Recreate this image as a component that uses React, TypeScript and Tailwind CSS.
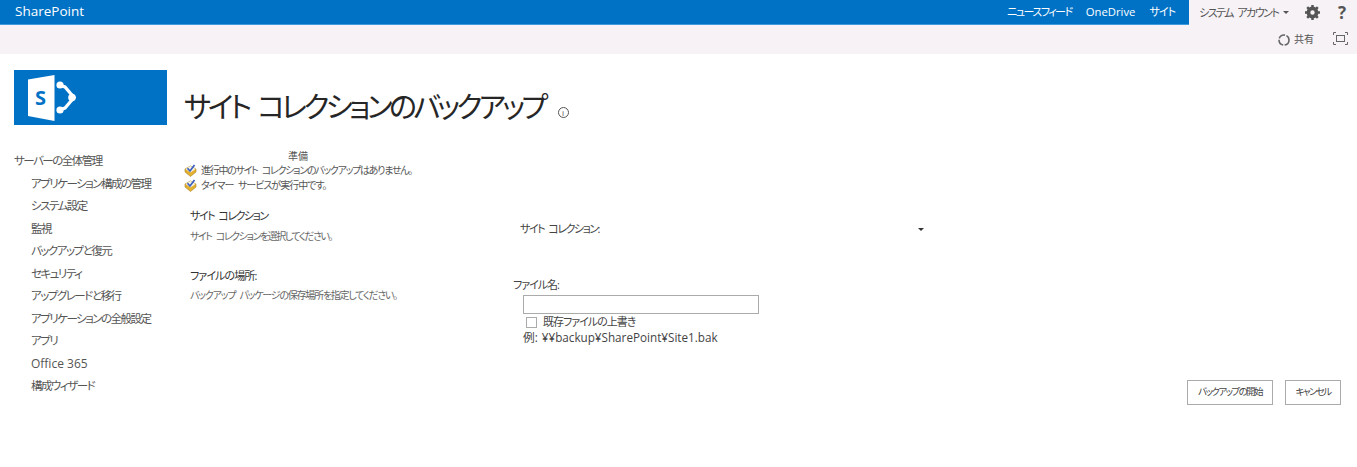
import React from "react";

function Check() {
  return (
    <svg width="13" height="13" viewBox="0 0 13 13" className="shrink-0">
      <path d="M6.5 2 L12 5 L12 8 L6.5 12.5 L1 8 L1 5 Z" fill="#e4b02f" stroke="#a8842a" strokeWidth="0.6" />
      <path d="M1.5 5 L6.5 2 L11.5 5 L6.5 8.5 Z" fill="#f6f3e4" />
      <path d="M3.5 4.2 L6 7 L10.5 1" fill="none" stroke="#3b5fc4" strokeWidth="1.7" />
    </svg>
  );
}

function Logo() {
  return (
    <svg width="50" height="46" viewBox="0 0 50 46" className="ml-[14px]">
      <path d="M0 4.5 L26.5 0 L26.5 46 L0 41 Z" fill="#fff" />
      <text x="7" y="29.5" fontSize="20" fontWeight="700" fill="#0072c6" fontFamily="Open Sans, sans-serif">S</text>
      <path d="M31 10 L37 12 L46 22.5 L37 33 L31 35" fill="none" stroke="#fff" strokeWidth="3.2" />
      <circle cx="32" cy="10" r="3.6" fill="#fff" />
      <circle cx="32" cy="35" r="3.6" fill="#fff" />
      <circle cx="44" cy="22.5" r="3.8" fill="#fff" />
    </svg>
  );
}

const nav = ["アプリケーション構成の管理", "システム設定", "監視", "バックアップと復元", "セキュリティ", "アップグレードと移行", "アプリケーションの全般設定", "アプリ", "Office 365", "構成ウィザード"];

export default function App() {
  return (
    <div className="w-[1357px] h-[467px] bg-white overflow-hidden text-[#444] font-['Open_Sans','Noto_Sans_CJK_JP',sans-serif] [font-feature-settings:'palt']">
      <header className="h-[25px] bg-[#0072c6] flex items-center text-white border-b border-[#3f9ade]">
        <span className="ml-[15px] text-[13.5px] leading-none">SharePoint</span>
        <nav className="ml-auto flex items-center h-full text-[11px] pt-[1px]">
          <span className="mr-[14px] tracking-[-1.5px]">ニュースフィード</span>
          <span className="mr-[14px] text-[11.3px]">OneDrive</span>
          <span className="mr-[14px] tracking-[-1px]">サイト</span>
        </nav>
        <div className="w-[168px] h-[25px] bg-[#f6f2f6] flex items-center text-[#555] text-[11px]">
          <span className="ml-[10px] mt-[2px] whitespace-nowrap tracking-[-1.5px] [word-spacing:3px]">システム アカウント</span>
          <span className="ml-[5px] mt-[1px] border-x-[3px] border-t-[3px] border-x-transparent border-t-[#555]" />
          <svg width="15" height="15" viewBox="0 0 24 24" className="ml-[16px]" fill="none" stroke="#555" strokeWidth="6">
            <circle cx="12" cy="12" r="6.5" />
            <path d="M12 0v5M12 19v5M0 12h5M19 12h5M3.5 3.5l3.5 3.5M17 17l3.5 3.5M20.5 3.5l-3.5 3.5M7 17l-3.5 3.5" strokeWidth="4" />
          </svg>
          <span className="ml-auto mr-[11px] text-[17px] font-bold leading-none">?</span>
        </div>
      </header>

      <div className="h-[29px] bg-[#f6f2f6] flex items-center justify-end text-[#555] text-[10px]">
        <svg width="14" height="14" viewBox="0 0 14 14" fill="none" stroke="#666" strokeWidth="1.6">
          <circle cx="7" cy="7" r="5" strokeDasharray="7 1.5" />
        </svg>
        <span className="ml-[3px] mr-[1px]">共有</span>
        <svg width="15" height="13" viewBox="0 0 15 13" className="ml-[18px] mr-[9px] mb-[2px]" fill="none" stroke="#666">
          <rect x="3.5" y="3.5" width="8" height="6" />
          <path d="M0.5 3V0.5H3M12 0.5H14.5V3M14.5 10V12.5H12M3 12.5H0.5V10" />
        </svg>
      </div>

      <div className="flex">
        <aside className="w-[184px] shrink-0 pt-[16px] pl-[14px]">
          <div className="w-[153px] h-[55px] bg-[#0072c6] flex items-center">
            <Logo />
          </div>
          <div className="mt-[25px] text-[11.5px] text-[#555] tracking-[-1.5px]">
            <div className="h-[22.5px] leading-[22.5px] whitespace-nowrap">サーバーの全体管理</div>
            {nav.map((n) => (
              <div key={n} className={n === "Office 365" ? "h-[22.5px] leading-[22.5px] pl-[17px] whitespace-nowrap text-[12px] tracking-normal" : "h-[22.5px] leading-[22.5px] pl-[17px] whitespace-nowrap"}>
                {n}
              </div>
            ))}
          </div>
        </aside>

        <main className="flex-1 min-w-0">
          <div className="mt-[29px] flex items-center h-[46px]">
            <h1 className="text-[29px] leading-none text-[#262626] whitespace-nowrap tracking-[-3.6px] [word-spacing:5px]">サイト コレクションのバックアップ</h1>
            <span className="ml-[13px] mt-[12px] w-[11px] h-[11px] rounded-full border border-[#555] text-[8px] leading-[9px] text-center tracking-normal">i</span>
          </div>

          <div className="mt-[20px] text-[10px] text-[#555] tracking-[-1.3px] [word-spacing:3px]">
            <div className="pl-[104px] leading-[14px] tracking-normal">準備</div>
            <div className="flex items-center h-[15px]"><Check /><span className="ml-[4px]">進行中のサイト コレクションのバックアップはありません。</span></div>
            <div className="flex items-center h-[15px]"><Check /><span className="ml-[4px] tracking-[-1px]">タイマー サービスが実行中です。</span></div>
          </div>

          <div className="flex mt-[16px]">
            <div className="w-[329px] pl-[6px] [word-spacing:3px]">
              <div className="text-[11px] text-[#333] leading-[14px] tracking-[-1.5px]">サイト コレクション</div>
              <div className="mt-[6px] text-[10px] text-[#666] leading-[14px] tracking-[-1.45px]">サイト コレクションを選択してください。</div>
              <div className="mt-[26px] text-[11px] text-[#333] leading-[14px] tracking-[-0.9px]">ファイルの場所:</div>
              <div className="mt-[5px] text-[10px] text-[#666] leading-[14px] tracking-[-1.25px]">バックアップ パッケージの保存場所を指定してください。</div>
            </div>
            <div className="w-[420px] text-[11px] text-[#444]">
              <div className="mt-[13px] flex items-center h-[14px] pl-[7px]">
                <span className="tracking-[-1.5px] [word-spacing:3px]">サイト コレクション:</span>
                <span className="ml-auto mr-[9px] border-x-[3px] border-t-[3px] border-x-transparent border-t-[#333]" />
              </div>
              <div className="mt-[41px] h-[16px] leading-[16px] tracking-[-1px]">ファイル名:</div>
              <div className="ml-[10px] mt-[2px]">
                <div className="w-[236px] h-[19px] border border-[#ababab] bg-white" />
                <div className="flex items-center h-[17px] mt-[-1px] pt-[1px]">
                  <span className="ml-[3px] w-[11px] h-[11px] border border-[#ababab] bg-white" />
                  <span className="ml-[6px] tracking-[-1px]">既存ファイルの上書き</span>
                </div>
                <div className="h-[17px] leading-[17px] mt-[-1px] text-[11.7px] [word-spacing:1px]">例: ¥¥backup¥SharePoint¥Site1.bak</div>
              </div>
            </div>
          </div>

          <div className="flex justify-end gap-[12px] mr-[16px] mt-[34px] text-[9.5px] text-[#444] tracking-[-1.6px]">
            <div className="w-[86px] h-[25px] border border-[#ababab] flex items-center justify-center whitespace-nowrap">バックアップの開始</div>
            <div className="w-[56px] h-[25px] border border-[#ababab] flex items-center justify-center whitespace-nowrap">キャンセル</div>
          </div>
        </main>
      </div>
    </div>
  );
}
